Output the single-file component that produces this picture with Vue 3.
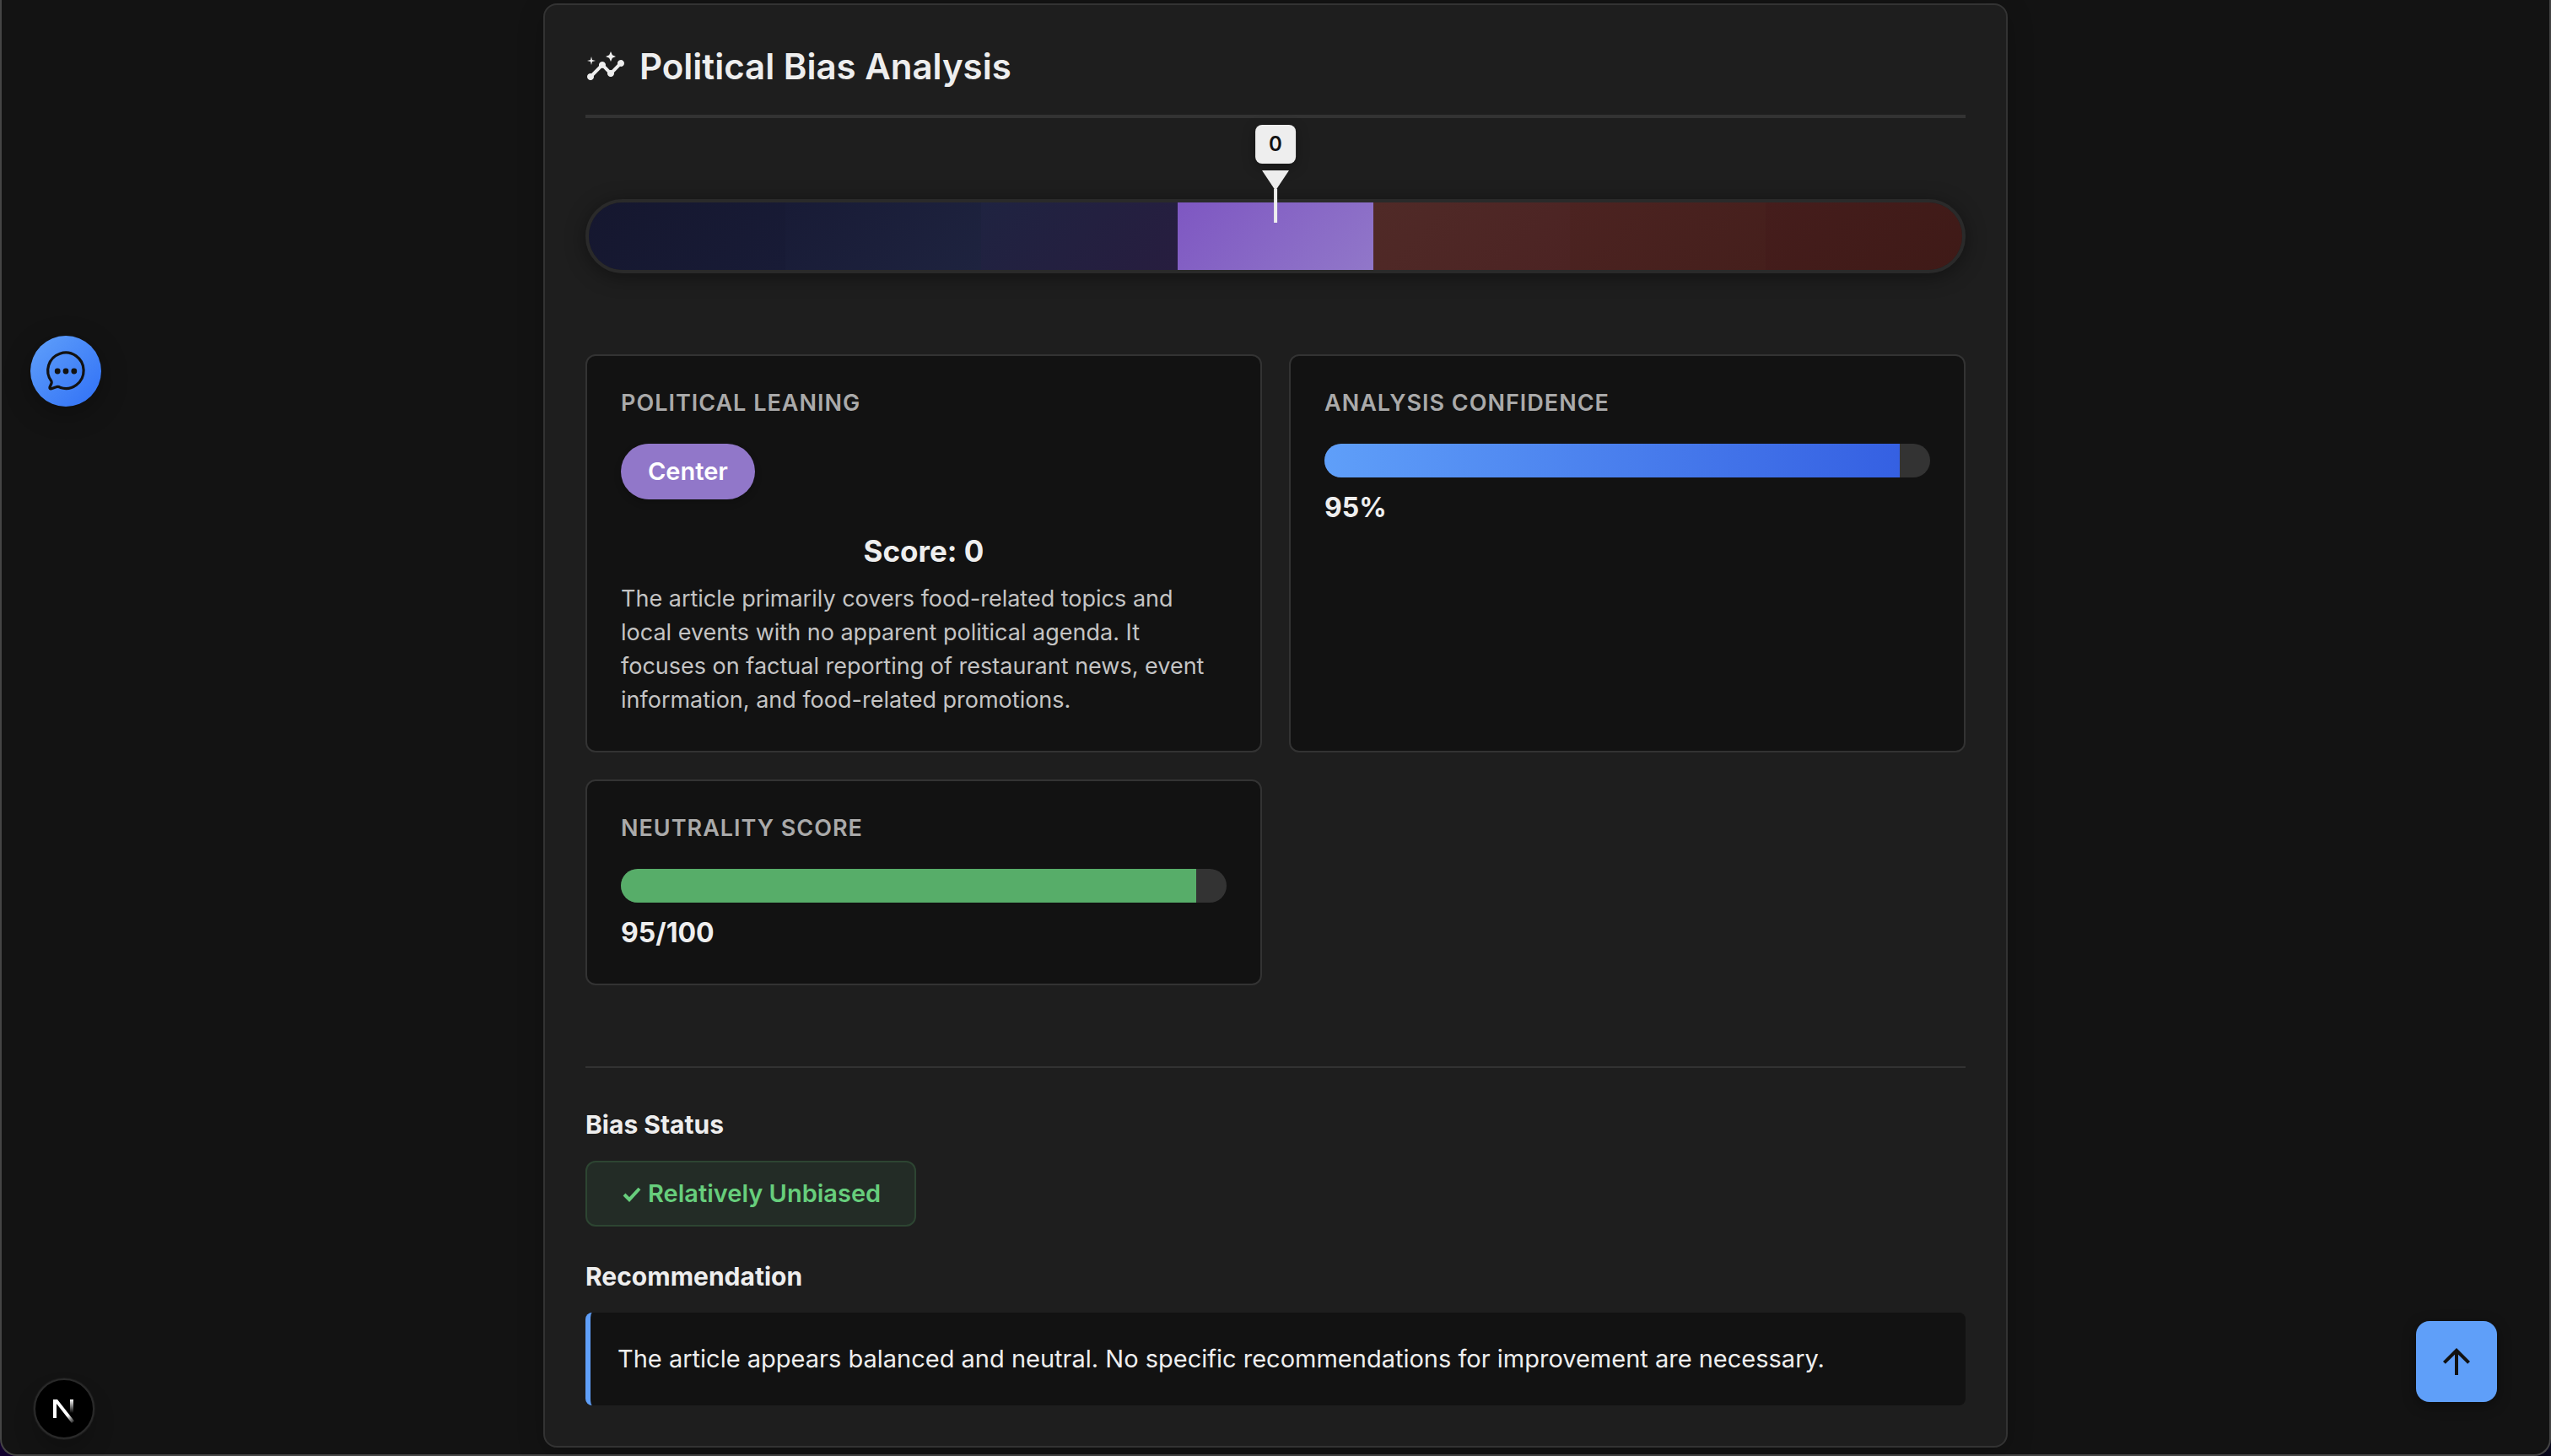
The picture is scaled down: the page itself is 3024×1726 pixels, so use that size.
<script setup>
const segments = [
  ['#15172f', '#181b36'],
  ['#181b36', '#1e233f'],
  ['#1f2341', '#271d3f'],
  ['#7e57c2', '#9177c9'],
  ['#502a27', '#4c2323'],
  ['#4c2321', '#451f1c'],
  ['#451d1c', '#3f1a17'],
]
const score = 0
const confidence = 95
const neutrality = 95
</script>

<template>
  <div class="window">
    <main class="panel">
      <header class="panel-header">
        <svg class="icon" viewBox="0 0 24 24" fill="currentColor" aria-hidden="true">
          <path d="M21 8c-1.45 0-2.26 1.44-1.93 2.51l-3.55 3.56c-.3-.09-.74-.09-1.04 0l-2.55-2.55C12.27 10.45 11.46 9 10 9c-1.45 0-2.27 1.44-1.93 2.52l-4.56 4.55C2.44 15.74 1 16.55 1 18c0 1.1.9 2 2 2 1.45 0 2.26-1.44 1.93-2.51l4.55-4.56c.3.09.74.09 1.04 0l2.55 2.55C12.73 16.55 13.54 18 15 18c1.45 0 2.27-1.44 1.93-2.52l3.56-3.55c1.07.33 2.51-.48 2.51-1.93 0-1.1-.9-2-2-2z" />
          <path d="m15 9 .94-2.07L18 6l-2.06-.93L15 3l-.92 2.07L12 6l2.08.93zM3.5 11 4 9l2-.5L4 8l-.5-2L3 8l-2 .5L3 9z" />
        </svg>
        <h1>Political Bias Analysis</h1>
      </header>

      <section class="spectrum" aria-label="Political spectrum">
        <div class="spectrum-bar">
          <span
            v-for="(colors, i) in segments"
            :key="i"
            class="segment"
            :style="{ background: `linear-gradient(135deg, ${colors[0]}, ${colors[1]})` }"
          ></span>
        </div>
        <div class="marker" :style="{ left: `${50 + score / 2}%` }">
          <span class="marker-label">{{ score }}</span>
          <span class="marker-arrow"></span>
          <span class="marker-line"></span>
        </div>
      </section>

      <section class="metrics">
        <article class="metric">
          <h2>Political Leaning</h2>
          <span class="badge">Center</span>
          <p class="score">Score: {{ score }}</p>
          <p class="description">
            The article primarily covers food-related topics and local events with no apparent
            political agenda. It focuses on factual reporting of restaurant news, event
            information, and food-related promotions.
          </p>
        </article>

        <article class="metric">
          <h2 id="confidence-label">Analysis Confidence</h2>
          <div class="track" role="progressbar" aria-labelledby="confidence-label" :aria-valuenow="confidence">
            <div class="fill fill-blue" :style="{ width: `${confidence}%` }"></div>
          </div>
          <p class="value">{{ confidence }}%</p>
        </article>

        <article class="metric">
          <h2 id="neutrality-label">Neutrality Score</h2>
          <div class="track" role="progressbar" aria-labelledby="neutrality-label" :aria-valuenow="neutrality">
            <div class="fill fill-green" :style="{ width: `${neutrality}%` }"></div>
          </div>
          <p class="value">{{ neutrality }}/100</p>
        </article>
      </section>

      <section class="summary">
        <h3>Bias Status</h3>
        <div class="status">
          <svg class="check" viewBox="0 0 24 24" aria-hidden="true">
            <path d="M4 13l6 6L22 6" fill="none" stroke="currentColor" stroke-width="4" />
          </svg>
          <span>Relatively Unbiased</span>
        </div>
        <h3>Recommendation</h3>
        <p class="recommendation">
          The article appears balanced and neutral. No specific recommendations for improvement are necessary.
        </p>
      </section>
    </main>

    <button class="chat-button" type="button" aria-label="Open chat">
      <svg viewBox="0 0 84 84" aria-hidden="true">
        <path
          d="M25 54A21.2 21.2 0 1 1 35.700 61.500Q33 59.800 30.500 60.800L25 62.800Q22.400 63.400 23 61L25 56.500Q25.400 55 25 54Z"
          fill="none"
          stroke="currentColor"
          stroke-width="3.2"
          stroke-linejoin="round"
        />
        <g fill="currentColor">
          <circle cx="32.200" cy="42" r="3.400" />
          <circle cx="42" cy="42" r="3.400" />
          <circle cx="51.800" cy="42" r="3.400" />
        </g>
      </svg>
    </button>

    <button class="dev-button" type="button" aria-label="Open developer tools">
      <svg viewBox="2 2 68 68" fill="none" aria-hidden="true">
        <defs>
          <linearGradient id="diagonal-fade" x1="41" y1="43" x2="49" y2="53" gradientUnits="userSpaceOnUse">
            <stop stop-color="#fff" />
            <stop offset="1" stop-color="#fff" stop-opacity="0" />
          </linearGradient>
          <linearGradient id="stem-fade" x1="45" y1="25" x2="45" y2="41" gradientUnits="userSpaceOnUse">
            <stop stop-color="#fff" />
            <stop offset="1" stop-color="#fff" stop-opacity="0" />
          </linearGradient>
        </defs>
        <path d="M23 47V25h5L48 50.500 45 53 27 30v17z" fill="url(#diagonal-fade)" />
        <path d="M43 25h4v16h-4z" fill="url(#stem-fade)" />
      </svg>
    </button>

    <button class="top-button" type="button" aria-label="Scroll to top">
      <svg class="icon" viewBox="0 0 24 24" fill="currentColor" aria-hidden="true">
        <path d="m4 12 1.410 1.410L11 7.830V20h2V7.830l5.580 5.590L20 12l-8-8z" />
      </svg>
    </button>
  </div>
</template>

<style>
body {
  margin: 0;
  background: linear-gradient(90deg, #12002e, #070619);
}
</style>

<style scoped>
* {
  box-sizing: border-box;
  margin: 0;
}

.window {
  min-height: 100vh;
  padding: 4px 24px 8px;
  border: 2px solid #454545;
  border-top: 0;
  border-radius: 0 0 20px 20px;
  background: #131313;
  color: #eeeeee;
  font-family: Inter, "Liberation Sans", sans-serif;
}

.panel {
  max-width: 1736px;
  margin: 0 auto;
  padding: 48px;
  border: 2px solid #333333;
  border-radius: 16px;
  background: #1e1e1e;
  box-shadow: 0 8px 32px rgba(0, 0, 0, 0.2);
}

.icon {
  width: 48px;
  height: 48px;
  flex: none;
}

.panel-header {
  display: flex;
  align-items: center;
  gap: 16px;
  padding-bottom: 32px;
  border-bottom: 4px solid #333333;
}

h1 {
  font-size: 42px;
  line-height: 50px;
  font-weight: 600;
}

.spectrum {
  position: relative;
  margin: 96px 0;
}

.spectrum-bar {
  display: flex;
  height: 88px;
  overflow: hidden;
  border: 4px solid #2a2a2a;
  border-radius: 44px;
  box-shadow: 0 4px 24px rgba(0, 0, 0, 0.4);
}

.segment {
  flex: 1;
}

.marker {
  position: absolute;
  bottom: 60px;
  display: flex;
  flex-direction: column;
  align-items: center;
  transform: translateX(-50%);
}

.marker-label {
  margin-bottom: 8px;
  padding: 8px 16px;
  border-radius: 8px;
  background: #eeeeee;
  box-shadow: 0 4px 16px rgba(0, 0, 0, 0.3);
  color: #121212;
  font-size: 24px;
  line-height: 30px;
  font-weight: 600;
}

.marker-arrow {
  width: 32px;
  height: 24px;
  background: #eeeeee;
  clip-path: polygon(0 0, 100% 0, 50% 100%);
}

.marker-line {
  width: 4px;
  height: 40px;
  margin-top: -2px;
  background: #eeeeee;
}

.metrics {
  display: grid;
  grid-template-columns: repeat(2, 1fr);
  gap: 32px;
}

.metric {
  padding: 40px;
  border: 2px solid #333333;
  border-radius: 12px;
  background: #121212;
}

h2 {
  margin-bottom: 32px;
  color: #aaaaaa;
  font-size: 27px;
  line-height: 32px;
  font-weight: 600;
  letter-spacing: 1px;
  text-transform: uppercase;
}

.badge {
  display: block;
  width: fit-content;
  padding: 16px 32px;
  border-radius: 33px;
  background: #9177c9;
  box-shadow: 0 4px 8px rgba(0, 0, 0, 0.2);
  color: #ffffff;
  font-size: 29px;
  line-height: 34px;
  font-weight: 600;
}

.score {
  margin: 40px 0 16px;
  font-size: 35px;
  line-height: 42px;
  font-weight: 700;
  text-align: center;
}

.description {
  color: #c4c4c4;
  font-size: 27px;
  line-height: 40px;
}

.track {
  height: 40px;
  overflow: hidden;
  border-radius: 20px;
  background: #333333;
}

.fill {
  height: 100%;
}

.fill-blue {
  background: linear-gradient(90deg, #5f9ff9, #3560e2);
}

.fill-green {
  background: #57ad69;
}

.value {
  margin-top: 16px;
  font-size: 32px;
  line-height: 40px;
  font-weight: 700;
}

.summary {
  margin-top: 96px;
  padding-top: 48px;
  border-top: 2px solid #333333;
}

h3 {
  margin-bottom: 24px;
  font-size: 30px;
  line-height: 38px;
  font-weight: 700;
}

.status {
  display: flex;
  align-items: center;
  gap: 8px;
  width: fit-content;
  margin-bottom: 40px;
  padding: 20px 40px;
  border: 2px solid #2d4532;
  border-radius: 12px;
  background: #232c26;
  color: #67ce7c;
  font-size: 29px;
  line-height: 34px;
  font-weight: 600;
}

.check {
  width: 24px;
  height: 24px;
}

.recommendation {
  padding: 32px;
  border-left: 6px solid #5f9ff9;
  border-radius: 8px;
  background: #121212;
  font-size: 29px;
  line-height: 46px;
}

button {
  position: fixed;
  display: grid;
  place-items: center;
  padding: 0;
  border: 0;
  color: #121212;
  cursor: pointer;
}

.chat-button {
  top: 398px;
  left: 36px;
  width: 84px;
  height: 84px;
  border-radius: 50%;
  background: linear-gradient(135deg, #60a0fa, #3070f6);
  box-shadow: 0 8px 32px rgba(0, 0, 0, 0.3);
}

.dev-button {
  bottom: 20px;
  left: 40px;
  width: 72px;
  height: 72px;
  border: 2px solid #2a2a2a;
  border-radius: 50%;
  background: #000000;
  box-shadow: 0 0 0 1px #1c1c1c, 0 16px 32px -8px rgba(0, 0, 0, 0.3);
}

.chat-button svg {
  width: 84px;
  height: 84px;
}

.dev-button svg {
  width: 68px;
  height: 68px;
}

.top-button {
  right: 64px;
  bottom: 64px;
  width: 96px;
  height: 96px;
  border-radius: 16px;
  background: #5f9ff9;
  box-shadow: 0 4px 16px rgba(0, 0, 0, 0.4);
}
</style>
